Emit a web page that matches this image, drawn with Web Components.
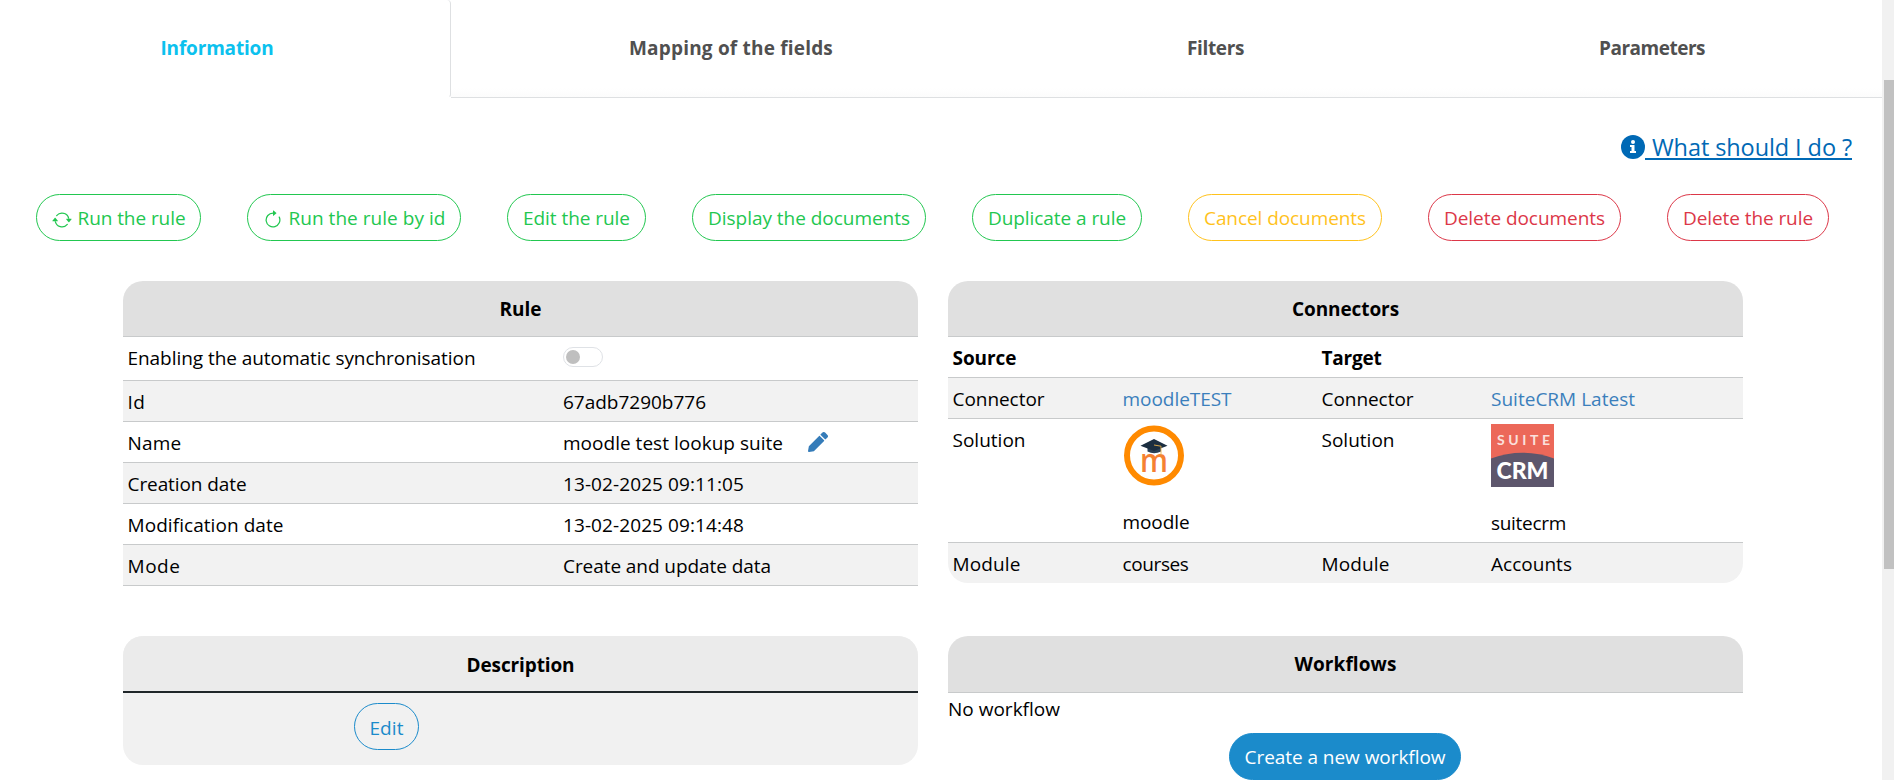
<!DOCTYPE html>
<html lang="en">
<head>
<meta charset="utf-8">
<title>Rule</title>
<style>
html,body{margin:0;height:100%;overflow:hidden;background:#fff}
body{font:19px/29px "Open Sans","Noto Sans",sans-serif;color:#000;display:flex}
main{flex:1;min-width:0}
.actions{display:flex;gap:46px;padding:34px 0 0 36px}
.grid{display:grid;grid-template-columns:795px 795px;column-gap:30px;row-gap:50px;padding:40px 0 0 123px;align-items:start}
a{color:#3b7fbc;text-decoration:none}
</style>
</head>
<body>
<main>
  <tab-bar>
    <tab-item active><fit-text w="113">Information</fit-text></tab-item>
    <tab-item><fit-text w="204">Mapping of the fields</fit-text></tab-item>
    <tab-item><fit-text w="57">Filters</fit-text></tab-item>
    <tab-item><fit-text w="106">Parameters</fit-text></tab-item>
  </tab-bar>
  <help-link><fit-text w="200">What should I do ?</fit-text></help-link>
  <div class="actions">
    <pill-button style="width:165px"><app-icon name="sync" slot="icon"></app-icon><fit-text w="108">Run the rule</fit-text></pill-button>
    <pill-button style="width:214px"><app-icon name="redo" slot="icon"></app-icon><fit-text w="157">Run the rule by id</fit-text></pill-button>
    <pill-button style="width:139px"><fit-text w="107">Edit the rule</fit-text></pill-button>
    <pill-button style="width:234px"><fit-text w="202">Display the documents</fit-text></pill-button>
    <pill-button style="width:170px"><fit-text w="138">Duplicate a rule</fit-text></pill-button>
    <pill-button style="width:194px" tone="warning"><fit-text w="162">Cancel documents</fit-text></pill-button>
    <pill-button style="width:193px" tone="danger"><fit-text w="161">Delete documents</fit-text></pill-button>
    <pill-button style="width:162px" tone="danger"><fit-text w="130">Delete the rule</fit-text></pill-button>
  </div>
  <div class="grid">
    <info-card kind="square">
      <fit-text slot="title" w="42">Rule</fit-text>
      <data-row cols="435.5px 1fr" style="height:44px"><fit-text w="348">Enabling the automatic synchronisation</fit-text><toggle-switch></toggle-switch></data-row>
      <data-row cols="435.5px 1fr" shade><fit-text w="18">Id</fit-text><fit-text w="143">67adb7290b776</fit-text></data-row>
      <data-row cols="435.5px auto 1fr"><fit-text w="54">Name</fit-text><fit-text w="220">moodle test lookup suite</fit-text><app-icon name="pencil" style="margin:3px 0 0 25px"></app-icon></data-row>
      <data-row cols="435.5px 1fr" shade><fit-text w="119">Creation date</fit-text><fit-text w="181">13-02-2025 09:11:05</fit-text></data-row>
      <data-row cols="435.5px 1fr"><fit-text w="156">Modification date</fit-text><fit-text w="181">13-02-2025 09:14:48</fit-text></data-row>
      <data-row cols="435.5px 1fr" shade><fit-text w="53">Mode</fit-text><fit-text w="208">Create and update data</fit-text></data-row>
    </info-card>
    <info-card style="margin-bottom:2px">
      <fit-text slot="title" w="107">Connectors</fit-text>
      <data-row cols="369px 1fr"><b><fit-text w="64">Source</fit-text></b><b><fit-text w="60">Target</fit-text></b></data-row>
      <data-row cols="170px 199px 169.5px 1fr" shade><fit-text w="92">Connector</fit-text><a href="#"><fit-text w="109">moodleTEST</fit-text></a><fit-text w="92">Connector</fit-text><a href="#"><fit-text w="144">SuiteCRM Latest</fit-text></a></data-row>
      <data-row cols="170px 199px 169.5px 1fr" style="height:124px"><fit-text w="73">Solution</fit-text><solution-logo name="moodle"><fit-text w="67">moodle</fit-text></solution-logo><fit-text w="73">Solution</fit-text><solution-logo name="suitecrm"><fit-text w="75">suitecrm</fit-text></solution-logo></data-row>
      <data-row cols="170px 199px 169.5px 1fr" shade last><fit-text w="68">Module</fit-text><fit-text w="66">courses</fit-text><fit-text w="68">Module</fit-text><fit-text w="81">Accounts</fit-text></data-row>
    </info-card>
    <info-card kind="soft">
      <fit-text slot="title" w="108">Description</fit-text>
      <div style="height:72px;padding:10px 0 0 231px;box-sizing:border-box"><pill-button tone="primary" style="width:65px"><fit-text w="34" style="margin-top:1px">Edit</fit-text></pill-button></div>
    </info-card>
    <info-card kind="tall">
      <fit-text slot="title" w="102">Workflows</fit-text>
      <div style="height:40px;padding-top:2px;box-sizing:border-box"><fit-text w="112">No workflow</fit-text></div>
      <pill-button tone="solid" style="width:232px;margin-left:281px"><fit-text w="201">Create a new workflow</fit-text></pill-button>
    </info-card>
  </div>
</main>
<scroll-track></scroll-track>
<script>
const define = (name, html, setup) => customElements.define(name, class extends HTMLElement {
  connectedCallback() {
    if (this.shadowRoot) return;
    this.attachShadow({mode: 'open'}).innerHTML = typeof html === 'function' ? html(this) : html;
    if (setup) setup(this, this.shadowRoot);
  }
});

define('tab-bar', `<style>
:host{display:grid;grid-template-columns:451px 560px 409px 1fr;height:98px}
</style><slot></slot>`);

define('tab-item', `<style>
:host{display:flex;justify-content:center;box-sizing:border-box;padding-top:34px;font-weight:700;color:#505050;border-bottom:1px solid #dee0e2;background:linear-gradient(#fff 88px,#fcfcfc)}
:host([active]){color:#0cc1ee;padding-right:16px;border-bottom-color:transparent;border-right:1px solid #dee0e2;border-bottom-right-radius:4px;border-top-right-radius:4px;background:#fff}
:host(:last-child){padding-left:2px}
</style><slot></slot>`);

define('help-link', `<style>
:host{display:flex;justify-content:flex-end;height:62px;box-sizing:border-box;padding:32px 30px 0 0;color:#0069b5;font-size:23.5px;line-height:35px}
svg{width:24px;height:24px;margin-top:5px}
span{border-bottom:2px solid #0069b5;height:28px;padding-left:7px}
</style><svg viewBox="0 0 24 24"><circle cx="12" cy="12" r="12" fill="#0069b5"/><circle cx="12" cy="7" r="2" fill="#fff"/><path d="M9 10h4.5v6H15v2H9v-2h1.5v-4H9z" fill="#fff"/></svg><span><slot></slot></span>`);

define('pill-button', `<style>
:host{display:flex;justify-content:center;align-items:flex-start;box-sizing:border-box;height:47px;padding-top:9px;border:1px solid var(--c);border-radius:24px;color:var(--c);--c:#22c750}
:host([tone=warning]){--c:#ffc21c}
:host([tone=danger]){--c:#dc3748}
:host([tone=primary]){--c:#1b8bcb}
:host([tone=solid]){--c:#1b8bcb;background:#1b8bcb;color:#fff}
</style><slot name="icon"></slot><slot></slot>`);

const ICONS = {
  sync: '<svg width="20" height="20" viewBox="0 0 16 16" style="margin:6px 6px 0 0" fill="currentColor"><path d="M11.534 7h3.932a.25.25 0 0 1 .192.41l-1.966 2.36a.25.25 0 0 1-.384 0l-1.966-2.36a.25.25 0 0 1 .192-.41m-11 2h3.932a.25.25 0 0 0 .192-.41L2.692 6.23a.25.25 0 0 0-.384 0L.342 8.59A.25.25 0 0 0 .534 9"/><path d="M8 3c-1.552 0-2.94.707-3.857 1.818a.5.5 0 1 1-.771-.636A6.002 6.002 0 0 1 13.917 7H12.9A5 5 0 0 0 8 3M3.1 9a5.002 5.002 0 0 0 8.757 2.182.5.5 0 1 1 .771.636A6.002 6.002 0 0 1 2.083 9z"/></svg>',
  redo: '<svg width="20" height="20" viewBox="0 0 16 16" style="margin:6px 6px 0 0" fill="currentColor"><path d="M8 3a5 5 0 1 0 4.546 2.914.5.5 0 0 1 .908-.417A6 6 0 1 1 8 2z"/><path d="M8 4.466V.534a.25.25 0 0 1 .41-.192l2.36 1.966c.12.1.12.284 0 .384L8.41 4.658A.25.25 0 0 1 8 4.466"/></svg>',
  pencil: '<svg width="20" height="20" viewBox="0 0 512 512" fill="#357cb9"><path d="M498 142l-46 46c-5 5-13 5-17 0L324 77c-5-5-5-12 0-17l46-46c19-19 49-19 68 0l60 60c19 19 19 49 0 68zm-214-42L22 362 0 484c-3 16 12 30 28 28l122-22 262-262c5-5 5-13 0-17L301 100c-4-5-12-5-17 0z"/></svg>'
};
define('app-icon', el => `<style>:host{display:block;line-height:0}</style>${ICONS[el.getAttribute('name')]}`);

define('info-card', `<style>
:host{display:block;border-radius:20px;overflow:hidden}
header{display:flex;justify-content:center;box-sizing:border-box;height:56px;padding-top:14px;background:#e0e0e0;border-bottom:1px solid #c8cacb;font-weight:700}
:host([kind=soft]){background:#f1f1f1}
:host([kind=soft]) header{height:57px;padding-top:15px;background:#ebebeb;border-bottom:2px solid #1f2629}
:host([kind=square]),:host([kind=tall]){border-radius:20px 20px 0 0}
:host([kind=tall]) header{height:57px}
</style><header><slot name="title"></slot></header><slot></slot>`);

define('data-row', el => `<style>
:host{display:grid;grid-template-columns:${el.getAttribute('cols')};height:41px;padding:7px 0 0 4.5px;box-sizing:border-box;border-bottom:1px solid #c8cacb;align-items:start;justify-items:start}
:host([shade]){background:#f2f2f2}
:host([last]){border-bottom:0;height:40px}
</style><slot></slot>`);

define('toggle-switch', `<style>
:host{display:block;box-sizing:border-box;width:40px;height:20px;margin-top:3px;border:1px solid #dfe2e6;border-radius:10px;padding:2px;background:#fff}
i{display:block;width:14px;height:14px;border-radius:50%;background:#bfbfbf}
</style><i></i>`);

const LOGOS = {
  moodle: `<svg width="62" height="63" viewBox="0 0 62 63"><circle cx="31" cy="31.500" r="27" fill="#fff" stroke="#ff8a00" stroke-width="6"/>
    <text x="17" y="48" font-size="33" font-weight="600" fill="#f58132" textLength="28" lengthAdjust="spacingAndGlyphs">m</text>
    <path d="M24.500 22v5.500q6.500 3.500 13.500 0V22z" fill="#2a4058"/><path d="M17.500 21.700L31 15 44.500 21.700 31 27z" fill="#1c2e40"/><path d="M31 21l7 1.200v9" fill="none" stroke="#e8b04a" stroke-width=".9"/></svg>`,
  suitecrm: `<svg width="63" height="63" viewBox="0 0 63 63"><path d="M0 0h63v63H0z" fill="#ec6859"/><path d="M0 34.500Q31.500 23 63 34.500V63H0z" fill="#5d566c"/>
    <text x="6" y="20.500" font-family="Lato" font-size="14" font-weight="700" fill="#fbe0dc" textLength="53">SUITE</text>
    <text x="5.500" y="55" font-family="Lato" font-size="23.500" font-weight="900" fill="#fff" textLength="52" lengthAdjust="spacingAndGlyphs">CRM</text></svg>`
};
define('solution-logo', el => `<style>
:host{display:block;margin-top:-2px}
svg{display:block}
div{margin-top:${el.getAttribute('name') === 'moodle' ? 21 : 22}px}
</style>${LOGOS[el.getAttribute('name')]}<div><slot></slot></div>`);

define('scroll-track', `<style>
:host{display:block;width:12px;height:780px;box-sizing:border-box;padding-top:80px;background:#f1f1f1;border-left:2px solid #f1f1f1}
i{display:block;height:489px;background:#c1c1c1}
</style><i></i>`);

/* Text run tracked out or in so that it takes up the advance given in "w". */
define('fit-text', `<style>:host{display:block;white-space:pre}span{display:inline-block}</style><span><slot></slot></span>`, (el, root) => {
  const span = root.querySelector('span');
  const gap = (el.getAttribute('w') - span.getBoundingClientRect().width) / el.textContent.length;
  span.style.letterSpacing = gap.toFixed(3) + 'px';
});
</script>
</body>
</html>
